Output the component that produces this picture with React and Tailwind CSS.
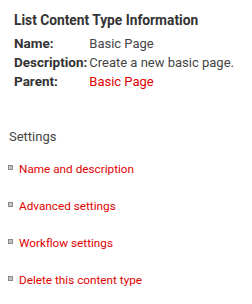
import React from "react";

const info = [
  { label: "Name:", value: "Basic Page" },
  { label: "Description:", value: "Create a new basic page." },
  { label: "Parent:", value: "Basic Page", link: true },
];

const settings = [
  "Name and description",
  "Advanced settings",
  "Workflow settings",
  "Delete this content type",
];

export default function App() {
  return (
    <div
      className="w-[252px] h-[304px] bg-white text-[#444] overflow-hidden"
      style={{ fontFamily: "Roboto, 'Liberation Sans', sans-serif" }}
    >
      <div className="pl-[14px] pt-[11px]">
        <h2 className="text-[13.75px] leading-[18px] font-bold text-[#333]">
          List Content Type Information
        </h2>
        <table className="mt-[5px] leading-[19px] border-collapse">
          <tbody>
            {info.map((row) => (
              <tr key={row.label}>
                <td className="text-[13.5px] font-bold text-[#333] p-0 pr-[2px] whitespace-nowrap">
                  {row.label}
                </td>
                <td
                  className={
                    "text-[13px] p-0 " +
                    (row.link ? "text-[#e00000]" : "text-[#444]")
                  }
                >
                  {row.value}
                </td>
              </tr>
            ))}
          </tbody>
        </table>
      </div>

      <div className="pl-[9px] mt-[37px] text-[13px] leading-[18px] text-[#444]">
        Settings
      </div>

      <ul className="mt-[13px] flex flex-col gap-[17px] pl-[8px]">
        {settings.map((s) => (
          <li key={s} className="flex items-start h-[20px]">
            <span className="mt-[6px] w-[5px] h-[5px] bg-[#c4c4c4] border border-[#8a8a8a] mr-[6px] shrink-0" />
            <a href="#" className="text-[11.75px] leading-[20px] text-[#e00000]">
              {s}
            </a>
          </li>
        ))}
      </ul>
    </div>
  );
}
